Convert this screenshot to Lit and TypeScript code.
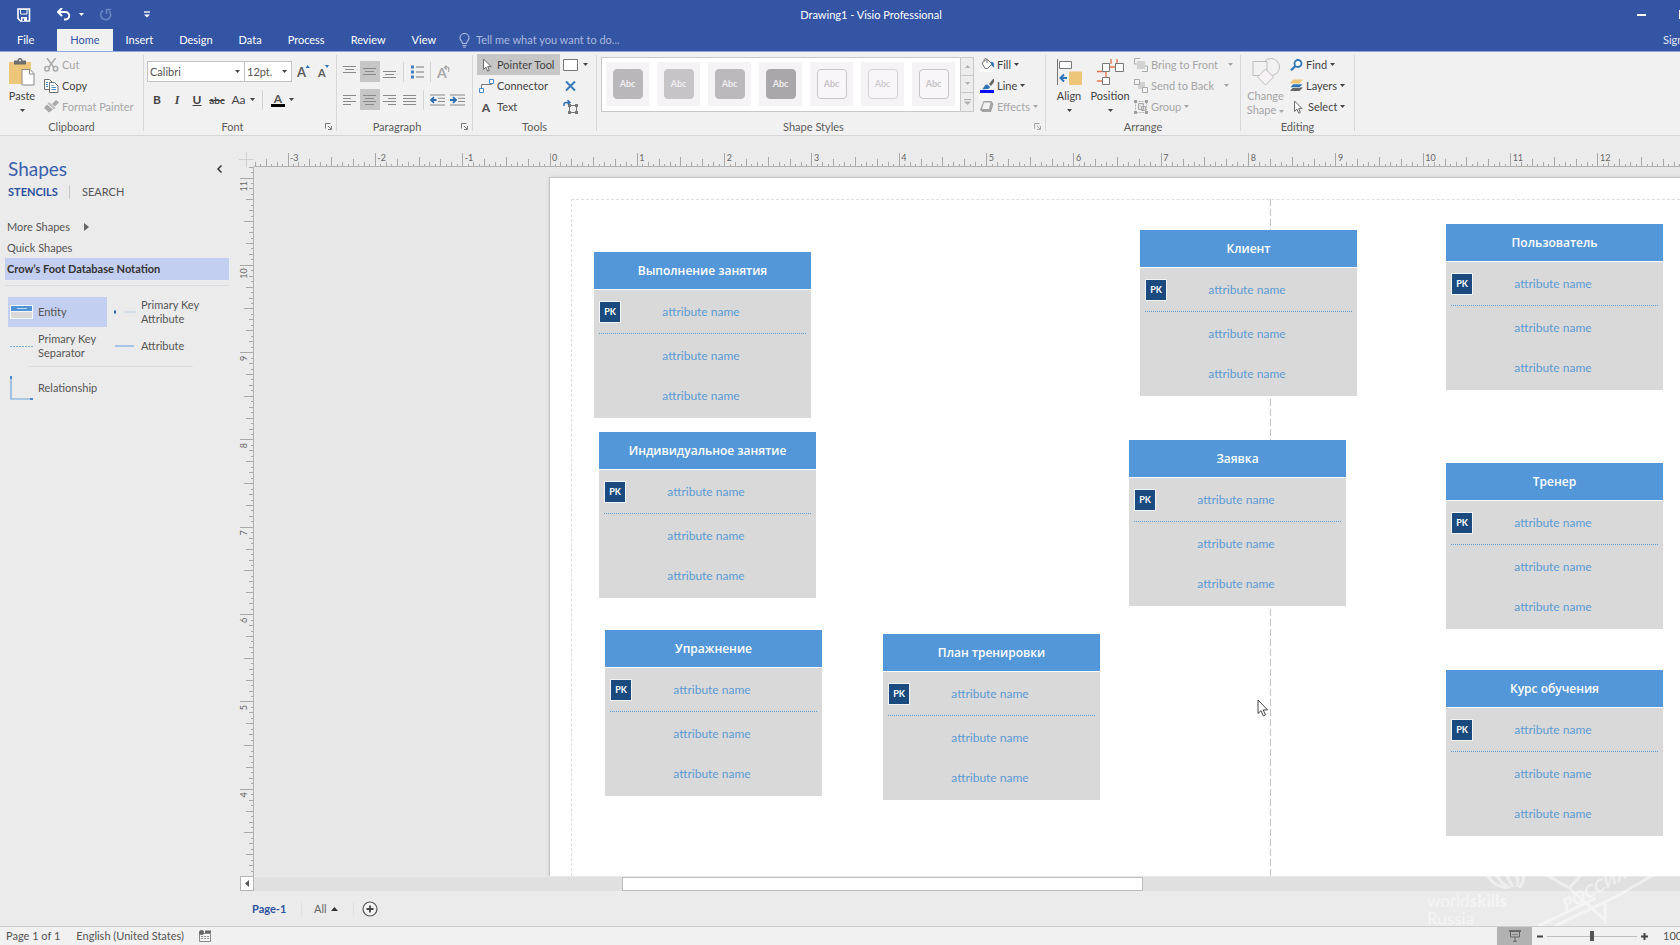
import { LitElement, html, svg, css } from "lit";
import { customElement, property } from "lit/decorators.js";
import { classMap } from "lit/directives/class-map.js";
import { styleMap } from "lit/directives/style-map.js";

const INCH = 87.33;

const icon = (w: number, h: number, body: unknown) =>
  html`<svg class="icon" width=${w} height=${h} viewBox="0 0 ${w} ${h}" aria-hidden="true">${body}</svg>`;

const caret = html`<svg class="caret" width="5" height="3" viewBox="0 0 5 3" aria-hidden="true"><path d="M0 0h5L2.5 3z" fill="currentColor"/></svg>`;

const icons = {
  save: icon(14, 14, svg`<path d="M1 1h11.500v12H3.500L1 10.500z" fill="none" stroke="#fff" stroke-width="1.600"/><path d="M3.500 1.500h6.500v4.500H3.500z" fill="#3355a4" stroke="#fff"/><path d="M4 9h6v4H4z" fill="#fff"/><path d="M5.500 10.500h1.500V13H5.500z" fill="#3355a4"/>`),
  undo: icon(14, 13, svg`<path d="M1 4h7.500a3.700 3.700 0 0 1 0 7.500H7" fill="none" stroke="#fff" stroke-width="2"/><path d="M5 0 1 4l4 4" fill="none" stroke="#fff" stroke-width="2"/>`),
  redo: icon(14, 13, svg`<path d="M4 2.500a5 5 0 1 0 6 0.500" fill="none" stroke="#6a84c4" stroke-width="1.700"/><path d="M7.500 6V1.500H12" fill="none" stroke="#6a84c4" stroke-width="1.600"/>`),
  customize: icon(6, 7, svg`<path d="M0 1h6" stroke="#fff" stroke-width="1.300"/><path d="M0 3.500h6L3 6.500z" fill="#fff"/>`),
  bulb: icon(11, 15, svg`<path d="M3.500 10.500c0-2-2.500-2.800-2.500-5.500a4.500 4.500 0 0 1 9 0c0 2.700-2.500 3.500-2.500 5.500z" fill="none" stroke="#a9b9df" stroke-width="1.200"/><path d="M3.500 12.500h4M4 14.200h3" stroke="#a9b9df"/>`),
  paste: icon(26, 28, svg`<path d="M0 4h22v22H0z" fill="#edc67a"/><path d="M5 2.500h3.500a2.500 2.500 0 0 1 5 0H17V6.500H5z" fill="#6d6d6d"/><circle cx="11" cy="2.500" r="1" fill="#f1f1f1"/><path d="M13 11.500h8l4 4V27H13z" fill="#fff" stroke="#8a8a8a"/><path d="M20.500 11.500V16H25" fill="none" stroke="#8a8a8a"/>`),
  cut: icon(15, 14, svg`<g fill="none" stroke="#a9a9a9" stroke-width="1.500"><path d="M3 0l6.500 9M11.500 0L5 9"/><circle cx="3" cy="10.800" r="2.200"/><circle cx="11.500" cy="10.800" r="2.200"/></g>`),
  copy: icon(15, 14, svg`<g fill="#fff" stroke="#6f6f6f"><path d="M.5.5h5l2.500 2.500v7.500H.5z"/><path d="M5.500 3.500h5l3.500 3.500v6.500H5.500z"/></g><path d="M2 3.500h2M2 5.500h2M2 7.500h2M7.500 6.500h2M7.500 8.500h4.500M7.500 10.500h4.500" stroke="#4a8bc6"/>`),
  painter: icon(15, 13, svg`<path d="M8 4l4-4 3 2.500-4 4z" fill="#a9a9a9"/><path d="M5 2l6.500 6-1.500 1.500L3.500 3.500z" fill="#bdbdbd"/><path d="M3 4.500L0 8l5 4.500 4-3z" fill="#a9a9a9"/>`),
  fontColor: icon(14, 14, svg`<text x="7" y="9.500" text-anchor="middle" font-family="Lato, sans-serif" font-weight="700" font-size="12" fill="#555">A</text><path d="M0 11h14v3H0z" fill="#000"/>`),
  grow: icon(13, 13, svg`<text x="0" y="12" font-family="Lato, sans-serif" font-weight="700" font-size="13" fill="#5c5c5c">A</text><path d="M8.500 3L10.500 0l2.500 3z" fill="#2e75b6"/>`),
  shrink: icon(13, 13, svg`<text x="1" y="12" font-family="Lato, sans-serif" font-weight="700" font-size="11" fill="#5c5c5c">A</text><path d="M8 0h4L10 3z" fill="#2e75b6"/>`),
  bullets: icon(13, 14, svg`<path d="M0 .5h3v3H0zM0 5.500h3v3H0zM0 10.500h3v3H0z" fill="#3f7fbf"/><path d="M5 2h8M5 7h8M5 12h8" stroke="#777"/>`),
  rotate: icon(14, 14, svg`<text x="0" y="13" font-family="Lato, sans-serif" font-weight="700" font-size="14" fill="#a8a8a8">A</text><path d="M8 2.500c3-2 5 1 3.500 4.500M9.500.5L7.500 2.700l2.500 1.800" fill="none" stroke="#a8a8a8" stroke-width="1.300"/>`),
  outdent: icon(15, 12, svg`<path d="M0 1h15M8 4.300h7M8 7.500h7M0 11h15" stroke="#8a8a8a"/><path d="M6.500 6H2M4 3.200L1 6l3 2.800" fill="none" stroke="#2b6cb0" stroke-width="1.800"/>`),
  indent: icon(15, 12, svg`<path d="M0 1h15M8 4.300h7M8 7.500h7M0 11h15" stroke="#8a8a8a"/><path d="M0 6h5M3 3.200L6 6 3 8.800" fill="none" stroke="#2b6cb0" stroke-width="1.800"/>`),
  pointer: icon(15, 14, svg`<path d="M4.500 1v10.500l2.500-2.300 1.700 4 1.600-.7L8.700 8.600h3.400z" fill="#fff" stroke="#6a6a6a"/>`),
  connector: icon(15, 14, svg`<path d="M2.500 9V5.500h10V4" fill="none" stroke="#777"/><path d="M10.500.5h4v4h-4zM.5 9.500h4v4h-4z" fill="#fff" stroke="#4a8bc6"/>`),
  text: icon(15, 14, svg`<text x="7" y="12" text-anchor="middle" font-family="Lato, sans-serif" font-weight="900" font-size="12" fill="#555">A</text>`),
  rect: icon(15, 12, svg`<path d="M.5.5h14v11H.5z" fill="#fff" stroke="#777"/>`),
  cross: icon(15, 12, svg`<path d="M3 1.500l9 9M12 1.500l-9 9" stroke="#3a79b8" stroke-width="2"/>`),
  crop: icon(15, 14, svg`<path d="M6.500 5.500h7v7h-7z" fill="none" stroke="#777"/><path d="M5 4h3v3H5zM12 4h3v3h-3zM5 11h3v3H5zM12 11h3v3h-3z" fill="#777"/><path d="M1 6V4.500q0-2 2-2h3M4.500 0L7 2.500 4.500 4" fill="none" stroke="#2e75b6" stroke-width="1.500"/>`),
  fill: icon(14, 14, svg`<path d="M0 11h14v3H0z" fill="#fff"/><path d="M2 5l5-4 5 5-4.500 4.500H5z" fill="#fff" stroke="#777"/><path d="M4 3V1.500q1.500-2 3 0V5" fill="none" stroke="#777"/><path d="M11 3.500q3 .5 3 3v3l-2.500-2z" fill="#2e75b6"/>`),
  line: icon(14, 14, svg`<path d="M9 5l4-5h1v3l-3 4z" fill="#666"/><path d="M2 10c2 0 2-5 5.500-4.500L10 8c0 2-3 2.500-8 2z" fill="#2e75b6"/><path d="M0 11h14v3H0z" fill="#0a0af5"/>`),
  effects: icon(14, 12, svg`<path d="M3.500 0h8l2 3-2.500 8H2.500L0 9z" fill="#a3a3a3"/><path d="M4 1.500h6.500L9 8H2z" fill="#f1f1f1"/>`),
  align: icon(25, 26, svg`<path d="M.5 0v26" stroke="#777"/><path d="M2.500 2.500h12v7h-12z" fill="#fff" stroke="#777"/><path d="M12 12.500h13V26H12z" fill="#edc67a"/><path d="M10 19H4.500M7 15.500L3.500 19 7 22.500" fill="none" stroke="#2e75b6" stroke-width="2"/>`),
  position: icon(27, 26, svg`<path d="M0 12.500h9M0 22h5M9 12v6M14 0v5M20 0v5M13 8h5" stroke="#e2744d" stroke-width="1.300"/><path d="M5.500 4.500h7v8h-7zM18.500 4.500h8v8h-8zM5.500 18.500h7v7h-7z" fill="#fff" stroke="#777"/>`),
  front: icon(14, 14, svg`<path d="M3 3h8v8H3z" fill="#d2d2d2"/><path d="M6 .5H.5V6H3M8 13.500h5.500V8H11" fill="none" stroke="#a9a9a9"/>`),
  back: icon(14, 14, svg`<path d="M4 3h7v7H4z" fill="#d2d2d2"/><path d="M.5.5h5v5h-5zM8.500 8.500h5v5h-5z" fill="#f4f4f4" stroke="#a9a9a9"/>`),
  group: icon(14, 14, svg`<path d="M1.500 1.500h11v11h-11z" fill="none" stroke="#b5b5b5" stroke-dasharray="2 1"/><path d="M4.500 3.500h5v6h-5zM7.500 6.500h4v4h-4z" fill="#e2e2e2" stroke="#a9a9a9"/><path d="M0 0h3v3H0zM11 0h3v3h-3zM0 11h3v3H0zM11 11h3v3h-3z" fill="#a0a0a0"/>`),
  change: icon(28, 28, svg`<circle cx="19" cy="9" r="8.500" fill="#f1f1f1" stroke="#bdbdbd"/><path d="M1 3.500h14v14H1z" fill="#f1f1f1" stroke="#bdbdbd"/><path d="M13.500 11l8 8-8 8-8-8z" fill="#f6f2f6" stroke="#bdbdbd"/>`),
  find: icon(13, 12, svg`<circle cx="8" cy="4.500" r="3.500" fill="#fff" stroke="#2e75b6" stroke-width="1.800"/><path d="M5.500 7L1 11.300" stroke="#2e75b6" stroke-width="2.200"/>`),
  layers: icon(13, 13, svg`<path d="M3 8.500h10l-3.500 3.500H0z" fill="#666"/><path d="M3 5h10L9.500 8.500H0z" fill="#2e75b6" stroke="#f1f1f1" stroke-width=".6"/><path d="M3 .5h10L9.500 4.500H0z" fill="#edc67a"/>`),
  launcher: icon(7, 7, svg`<path d="M.5 5.500V.5h5" fill="none" stroke="currentColor"/><path d="M3 3l3 3M6.500 3v3.500H3" fill="none" stroke="currentColor"/>`),
  macro: icon(12, 12, svg`<path d="M.5 3.500h11v8H.5z" fill="#f4f4f4" stroke="#8a8a8a"/><path d="M6 .5h6V3H6z" fill="#666"/><circle cx="2.500" cy="2.500" r="2.500" fill="#666"/><path d="M2 6.500h8M2 8.500h8" stroke="#8a8a8a" stroke-dasharray="2 1"/>`),
  present: icon(12, 12, svg`<path d="M0 1h12" stroke="#555" stroke-width="1.500"/><path d="M1.500 1.500h9v5.500h-9zM6 7v4M4 11.300h4" fill="none" stroke="#666"/><path d="M3 4.500h6" stroke="#888"/>`),
  plusCircle: icon(16, 16, svg`<circle cx="8" cy="8" r="7" fill="#f4f4f4" stroke="#555" stroke-width="1.200"/><path d="M8 4.500v7M4.500 8h7" stroke="#444" stroke-width="1.800"/>`),
};

const lines = (rows: number[][]) =>
  icon(14, 12, svg`${rows.map(([x, y, w]) => svg`<path d="M${x} ${y}h${w}" stroke="#8a8a8a"/>`)}`);

const paraIcons = {
  top: lines([[0, 0.5, 13], [2, 3.5, 9], [0, 6.5, 13]]),
  middle: lines([[0, 2.5, 13], [2, 5.5, 9], [0, 8.5, 13]]),
  bottom: lines([[0, 5.5, 13], [2, 8.5, 9], [0, 11.5, 13]]),
  left: lines([[0, 1.5, 13], [0, 4.5, 8], [0, 7.5, 13], [0, 10.5, 8]]),
  center: lines([[0, 1.5, 13], [2, 4.5, 9], [0, 7.5, 13], [2, 10.5, 9]]),
  right: lines([[0, 1.5, 13], [5, 4.5, 8], [0, 7.5, 13], [5, 10.5, 8]]),
  justify: lines([[0, 1.5, 13], [0, 4.5, 13], [0, 7.5, 13], [0, 10.5, 13]]),
};

const base = css`
  :host, * { box-sizing: border-box; }
  button {
    font: inherit; color: inherit; background: none; border: 0; padding: 0; margin: 0;
    display: inline-flex; align-items: center; white-space: nowrap;
  }
  .icon, .caret { display: block; flex: none; }
  h2, p, ul { margin: 0; padding: 0; font: inherit; }
`;

@customElement("visio-title")
class VisioTitle extends LitElement {
  static styles = [base, css`
    :host { display: block; background: #3355a4; color: #fff; height: 52px; border-bottom: 1px solid #8fa9dc; overflow: hidden; }
    .bar { display: grid; height: 29px; align-items: center; }
    .bar > * { grid-area: 1 / 1; }
    .quick { display: flex; align-items: center; padding-left: 17px; height: 26px; }
    .quick .undo { margin-left: 26px; }
    .quick .more { margin-left: 8px; }
    .quick .redo { margin-left: 15px; }
    .quick .custom { margin-left: 31px; }
    h1 { margin: 0; font: inherit; text-align: center; padding-left: 62px; }
    .window { justify-self: end; display: flex; gap: 33px; width: 43px; align-items: center; }
    .min { width: 9px; height: 2px; background: #fff; flex: none; }
    .max { width: 9px; height: 9px; border: 1px solid #fff; flex: none; }
    .tabs { display: flex; height: 22px; align-items: stretch; }
    .tabs button { padding: 0 13px; }
    .tabs .file { padding: 0 23px 0 17px; }
    .tabs .active { background: #f1f1f1; color: #3355a4; }
    .tell { display: flex; align-items: center; gap: 6px; margin-left: 10px; color: #a9b9df; }
    .tell input { width: 180px; border: 0; padding: 0; background: none; font: inherit; color: inherit; }
    .tell input::placeholder { color: #a9b9df; opacity: 1; }
    .tabs .sign { margin-left: auto; padding: 0; width: 17px; color: #e3e9f6; }
  `];
  render() {
    return html`
      <div class="bar">
        <div class="quick">
          <button aria-label="Save">${icons.save}</button>
          <button class="undo" aria-label="Undo">${icons.undo}</button>
          <button class="more" aria-label="Undo history">${caret}</button>
          <button class="redo" aria-label="Redo">${icons.redo}</button>
          <button class="custom" aria-label="Customize toolbar">${icons.customize}</button>
        </div>
        <h1>Drawing1 - Visio Professional</h1>
        <div class="window"><button class="min" aria-label="Minimize"></button><button class="max" aria-label="Maximize"></button></div>
      </div>
      <div class="tabs">
        <button class="file">File</button>
        ${["Home", "Insert", "Design", "Data", "Process", "Review", "View"].map(
          (t) => html`<button class=${classMap({ active: t === "Home" })}>${t}</button>`
        )}
        <label class="tell">${icons.bulb}<input aria-label="Tell me" placeholder="Tell me what you want to do..." /></label>
        <button class="sign">Sign in</button>
      </div>`;
  }
}

@customElement("visio-ribbon")
class VisioRibbon extends LitElement {
  static styles = [base, css`
    :host { display: flex; background: #f1f1f1; border-bottom: 1px solid #d5d5d5; height: 84px; color: #444; }
    section { display: grid; grid-template-rows: 66px 17px; position: relative; flex: none; padding-right: 1px; }
    section::after { content: ""; position: absolute; right: 0; top: 3px; bottom: 4px; width: 1px; background: #d8d8d8; }
    .w1 { width: 144px; } .w2 { width: 193px; } .w3 { width: 136px; } .w4 { width: 124px; }
    .w5 { width: 449px; } .w6 { width: 195px; } .w7 { width: 114px; }
    .foot { display: grid; grid-template-columns: 1fr auto; align-items: center; color: #5c5c5c; }
    .foot h2 { text-align: center; }
    .foot button { width: 15px; color: #777; padding-left: 4px; }
    .body { display: flex; padding-top: 2px; }
    .stack { display: grid; grid-template-rows: repeat(3, 21px); justify-items: start; align-content: start; }
    .stack button { gap: 3px; height: 21px; }
    .off, .foot .off { color: #a6a6a6; }
    .big { flex-direction: column; justify-content: flex-start; padding-top: 4px; line-height: 14px; height: 64px; }
    .big .icon { height: 28px; }
    .big span { margin-top: 3px; }
    .big .caret { margin-top: 6px; }
    .big .two { margin-top: 3px; display: block; text-align: center; }
    .big .two .caret { display: inline-block; vertical-align: middle; margin: 0 0 0 3px; }
    .paste { width: 44px; }
    .rows { display: grid; grid-template-rows: 21px 21px; row-gap: 7px; padding: 9px 0 0 3px; align-content: start; }
    .row { display: flex; align-items: center; }
    .t { width: 20px; height: 21px; justify-content: center; flex: none; }
    .on { background: #c6c6c6; }
    .sep { width: 1px; height: 20px; background: #d4d4d4; margin: 0 3px; flex: none; }
    .sel { position: relative; display: flex; align-items: center; }
    .sel .caret { position: absolute; right: 5px; pointer-events: none; }
    select { appearance: none; font: inherit; color: #555; background: #fff; border: 1px solid #c3c3c3; height: 21px; padding: 0 2px; border-radius: 0; }
    .face { width: 98px; } .size { width: 48px; margin-left: -1px; }
    .size + .caret { margin: 0; }
    .sizes { margin-right: 1px; }
    b, i, u, s { font-size: 12px; }
    i { font-family: "Liberation Serif", serif; font-weight: 700; }
    u { font-weight: 700; } s { font-size: 10px; font-weight: 700; }
    .case { width: 32px; gap: 4px; font-size: 12px; justify-content: center; }
    .tools { padding-left: 4px; grid-template-columns: 84px auto; }
    .tools .main { width: 83px; padding-left: 2px; }
    .tools .side { padding-left: 2px; gap: 5px; }
    .gallery { margin: 3px 0 0 4px; height: 55px; border: 1px solid #c8c8c8; background: #fff; display: flex; }
    .swatches { display: flex; gap: 8px; padding: 4px 5px 4px 4px; }
    .swatch { width: 43px; height: 44px; background: #f6f3f6; justify-content: center; }
    .swatch span { width: 30px; height: 30px; border-radius: 4px; border: 1px solid var(--edge); background: var(--tone); color: var(--ink); display: grid; place-items: center; font-size: 9px; font-weight: 700; }
    .steps { display: grid; grid-template-rows: repeat(3, 1fr); border-left: 1px solid #c8c8c8; background: #ededed; width: 13px; color: #b0b0b0; }
    .steps button { justify-content: center; border-bottom: 1px solid #c8c8c8; }
    .steps button:last-child { border-bottom: 0; }
    .flip { transform: rotate(180deg); }
    .fills { padding-left: 6px; }
    .align { width: 40px; margin-left: 3px; }
    .pos { width: 42px; }
    .arr { padding-left: 3px; }
    .arr .far .caret { margin-left: 7px; }
    .chg { width: 49px; }
  `];
  private foot(name: string, launcher = false, off = false) {
    return html`<div class="foot"><h2>${name}</h2>
      ${launcher ? html`<button class=${classMap({ off })} aria-label="${name} settings">${icons.launcher}</button>` : ""}</div>`;
  }
  render() {
    const styles = [
      ["#b9b7ba", "#b9b7ba", "#f0eef0"], ["#c6c4c7", "#c6c4c7", "#f0eef0"], ["#bbb9bc", "#bbb9bc", "#f0eef0"], ["#a9a7aa", "#a9a7aa", "#f0eef0"],
      ["#f9f6f9", "#c9c6c9", "#c4c1c4"], ["#f9f6f9", "#d6d2d6", "#cfccd0"], ["#f9f6f9", "#c9c6c9", "#c4c1c4"],
    ];
    return html`
      <section class="w1">
        <div class="body">
          <button class="big paste">${icons.paste}<span>Paste</span>${caret}</button>
          <div class="stack">
            <button class="off">${icons.cut}Cut</button>
            <button>${icons.copy}Copy</button>
            <button class="off">${icons.painter}Format Painter</button>
          </div>
        </div>
        ${this.foot("Clipboard")}
      </section>
      <section class="w2">
        <div class="body rows">
          <div class="row">
            <label class="sel"><select class="face" aria-label="Font"><option>Calibri</option></select>${caret}</label>
            <label class="sel sizes"><select class="size" aria-label="Font size"><option>12pt.</option></select>${caret}</label>
            <button class="t" aria-label="Increase font size">${icons.grow}</button>
            <button class="t" aria-label="Decrease font size">${icons.shrink}</button>
          </div>
          <div class="row">
            <button class="t"><b>B</b></button><button class="t"><i>I</i></button>
            <button class="t"><u>U</u></button><button class="t"><s>abc</s></button>
            <button class="case">Aa${caret}</button><span class="sep"></span>
            <button class="case" aria-label="Font color">${icons.fontColor}${caret}</button>
          </div>
        </div>
        ${this.foot("Font", true)}
      </section>
      <section class="w3">
        <div class="body rows">
          <div class="row">
            <button class="t" aria-label="Align top">${paraIcons.top}</button>
            <button class="t on" aria-label="Align middle">${paraIcons.middle}</button>
            <button class="t" aria-label="Align bottom">${paraIcons.bottom}</button><span class="sep"></span>
            <button class="t" aria-label="Bullets">${icons.bullets}</button><span class="sep"></span>
            <button class="t" aria-label="Rotate text">${icons.rotate}</button>
          </div>
          <div class="row">
            <button class="t" aria-label="Align left">${paraIcons.left}</button>
            <button class="t on" aria-label="Center">${paraIcons.center}</button>
            <button class="t" aria-label="Align right">${paraIcons.right}</button>
            <button class="t" aria-label="Justify">${paraIcons.justify}</button><span class="sep"></span>
            <button class="t" aria-label="Decrease indent">${icons.outdent}</button>
            <button class="t" aria-label="Increase indent">${icons.indent}</button>
          </div>
        </div>
        ${this.foot("Paragraph", true)}
      </section>
      <section class="w4">
        <div class="body">
          <div class="stack tools">
            <button class="main on">${icons.pointer}Pointer Tool</button>
            <button class="side" aria-label="Rectangle">${icons.rect}${caret}</button>
            <button class="main">${icons.connector}Connector</button>
            <button class="side" aria-label="Connection point">${icons.cross}</button>
            <button class="main">${icons.text}Text</button>
            <button class="side" aria-label="Text block">${icons.crop}</button>
          </div>
        </div>
        ${this.foot("Tools")}
      </section>
      <section class="w5">
        <div class="body">
          <div class="gallery">
            <div class="swatches">
              ${styles.map(([tone, edge, ink]) => html`<button class="swatch"><span style=${styleMap({ "--tone": tone, "--edge": edge, "--ink": ink })}>Abc</span></button>`)}
            </div>
            <div class="steps">
              <button aria-label="Previous styles"><span class="flip">${caret}</span></button>
              <button aria-label="Next styles">${caret}</button>
              <button aria-label="More styles">${icon(7, 6, svg`<path d="M0 .5h7" stroke="#b0b0b0"/><path d="M0 2.500h7L3.500 6z" fill="#b0b0b0"/>`)}</button>
            </div>
          </div>
          <div class="stack fills">
            <button>${icons.fill}Fill${caret}</button>
            <button>${icons.line}Line${caret}</button>
            <button class="off">${icons.effects}Effects${caret}</button>
          </div>
        </div>
        ${this.foot("Shape Styles", true, true)}
      </section>
      <section class="w6">
        <div class="body">
          <button class="big align">${icons.align}<span>Align</span>${caret}</button>
          <button class="big pos">${icons.position}<span>Position</span>${caret}</button>
          <div class="stack arr">
            <button class="off far">${icons.front}Bring to Front${caret}</button>
            <button class="off far">${icons.back}Send to Back${caret}</button>
            <button class="off">${icons.group}Group${caret}</button>
          </div>
        </div>
        ${this.foot("Arrange")}
      </section>
      <section class="w7">
        <div class="body">
          <button class="big chg off">${icons.change}<span class="two">Change<br />Shape${caret}</span></button>
          <div class="stack">
            <button>${icons.find}Find${caret}</button>
            <button>${icons.layers}Layers${caret}</button>
            <button>${icons.pointer}Select${caret}</button>
          </div>
        </div>
        ${this.foot("Editing")}
      </section>`;
  }
}

@customElement("visio-shapes")
class VisioShapes extends LitElement {
  static styles = [base, css`
    :host { display: block; width: 239px; flex: none; padding: 20px 10px 0 5px; color: #555; }
    .head { display: flex; justify-content: space-between; align-items: center; padding: 0 7px 0 3px; height: 26px; }
    h1 { margin: 0; font-size: 19px; font-weight: 400; line-height: 26px; color: #3a5fae; }
    .modes { display: flex; align-items: center; gap: 12px; height: 20px; padding-left: 3px; }
    .modes .cur { font-weight: 700; color: #2c4f9e; width: 49px; }
    .modes i { width: 1px; height: 14px; background: #c8c8c8; }
    .list { margin-top: 14px; display: grid; grid-template-rows: 21px 21px; justify-items: start; padding-left: 2px; }
    .list button { gap: 14px; }
    .stencil { width: 100%; height: 22px; background: #c3cff1; padding-left: 2px; font-weight: 700; color: #333; }
    .items { border-top: 1px solid #d8dbe2; margin: 5px 0 0; padding: 11px 0 0 3px; display: grid; grid-template-columns: 99px 4px 99px; grid-template-rows: 30px 38px; }
    .items button { text-align: left; gap: 5px; line-height: 14px; padding-left: 2px; white-space: normal; }
    .items .icon { width: 23px; }
    .items .second { grid-column: 3; }
    .picked { background: #c3cff1; }
    .rel { border-top: 1px solid #dcdcdc; margin: 1px 36px 0 23px; }
    .relb { gap: 5px; margin: 9px 0 0 5px; }
  `];
  render() {
    return html`
      <div class="head"><h1>Shapes</h1><button aria-label="Collapse">${icon(5, 8, svg`<path d="M4.500.5L1 4l3.500 3.500" fill="none" stroke="#333" stroke-width="1.500"/>`)}</button></div>
      <div class="modes"><button class="cur">STENCILS</button><i></i><button>SEARCH</button></div>
      <div class="list">
        <button>More Shapes${icon(5, 8, svg`<path d="M0 0v8l5-4z" fill="#666"/>`)}</button>
        <button>Quick Shapes</button>
      </div>
      <button class="stencil">Crow’s Foot Database Notation</button>
      <div class="items">
        <button class="picked">${icon(23, 14, svg`<path d="M0 0h23v14H0z" fill="#f5f7fb"/><path d="M1 1h21v5H1z" fill="#4f94d6"/><path d="M7 3.500h10" stroke="#b9d6f0"/><path d="M1 7h21v6H1z" fill="#d9d9d9"/>`)}<span>Entity</span></button>
        <button class="second">${icon(23, 4, svg`<path d="M1 .5h2v3H1z" fill="#2f5f94"/><path d="M11 2h12" stroke="#b8cfe6"/>`)}<span>Primary Key Attribute</span></button>
        <button>${icon(23, 3, svg`<path d="M0 1.500h23" stroke="#7fb0dd" stroke-dasharray="2 1"/>`)}<span>Primary Key Separator</span></button>
        <button class="second">${icon(23, 4, svg`<path d="M2 2h19" stroke="#8fb9e2" stroke-width="1.500"/>`)}<span>Attribute</span></button>
      </div>
      <div class="rel"></div>
      <button class="relb">${icon(23, 24, svg`<path d="M1 1v22h21" fill="none" stroke="#6ca6dc" stroke-width="1.200"/><path d="M0 0h2v3H0zM20 22h3v2h-3z" fill="#4a8bc6"/>`)}Relationship</button>`;
  }
}

@customElement("visio-entity")
class VisioEntity extends LitElement {
  @property() name = "";
  static styles = [base, css`
    :host { display: block; width: 217px; font-size: 12px; line-height: 16px; }
    h2 { background: #5497d8; color: #fff; font: 600 12px/37px "Open Sans", sans-serif; text-align: center; margin-bottom: 1px; }
    .body { background: #d9d9d9; color: #5b9bd5; padding: 0 5px 5px; }
    .row { display: grid; align-items: center; height: 44px; }
    .key { height: 43px; border-bottom: 1px dotted #5b9bd5; box-sizing: content-box; }
    .last { height: 35px; }
    .row > * { grid-area: 1 / 1; text-align: center; padding-right: 3px; }
    .row .pk { justify-self: start; width: 22px; height: 22px; padding: 0; background: #1b4a7e; color: #fff; border: 1px solid #f0f4f8; font-size: 9px; line-height: 20px; font-weight: 700; }
  `];
  render() {
    return html`<h2>${this.name}</h2>
      <div class="body">
        <div class="row key"><span>attribute name</span><span class="pk">PK</span></div>
        <div class="row"><span>attribute name</span></div>
        <div class="row last"><span>attribute name</span></div>
      </div>`;
  }
}

const tickLength = (i: number) => (i % 16 === 0 ? 14 : i % 8 === 0 ? 10 : i % 4 === 0 ? 8 : i % 2 === 0 ? 5 : 3);
const range = (from: number, to: number) => Array.from({ length: to - from + 1 }, (_, k) => from + k);

const entities = [
  { name: "Выполнение занятия", x: 44, y: 74 },
  { name: "Индивидуальное занятие", x: 49, y: 254 },
  { name: "Упражнение", x: 55, y: 452 },
  { name: "План тренировки", x: 333, y: 456 },
  { name: "Клиент", x: 590, y: 52 },
  { name: "Заявка", x: 579, y: 262 },
  { name: "Пользователь", x: 896, y: 46 },
  { name: "Тренер", x: 896, y: 285 },
  { name: "Курс обучения", x: 896, y: 492 },
];

@customElement("visio-workspace")
class VisioWorkspace extends LitElement {
  static styles = [base, css`
    :host { position: relative; flex: 1; min-width: 0; display: flex; flex-direction: column; padding-top: 16px; }
    .area { flex: 1; display: grid; grid-template-columns: 15px 1fr; grid-template-rows: 15px 1fr; min-height: 0; }
    .area > svg { display: block; width: 100%; height: 100%; min-width: 0; min-height: 0; overflow: hidden; }
    .hr { border-bottom: 1px solid #b0b0b0; } .vr { border-right: 1px solid #b0b0b0; }
    .ticks { stroke: #a8a8a8; shape-rendering: crispEdges; }
    text { font-size: 9px; fill: #666; }
    .canvas { position: relative; overflow: hidden; background: #e8e8e8; min-height: 0; }
    .page { position: absolute; left: 296px; top: 11px; right: -200px; bottom: -200px; background: #fff; box-shadow: 0 0 0 1px #c4c4c4, 0 0 4px #b8b8b8; }
    .margins { position: absolute; left: 21px; top: 21px; right: 0; bottom: 0; border-left: 1px dashed #dedede; border-top: 1px dashed #dedede; }
    .break { position: absolute; left: 720px; top: 21px; bottom: 0; width: 1px; background: repeating-linear-gradient(#c6c6c6 0 7px, transparent 7px 10px); }
    visio-entity { position: absolute; }
    .cursor { position: absolute; left: 707px; top: 521px; }
    .scroll { display: flex; height: 15px; }
    .scroll button { width: 14px; margin-left: 1px; border: 1px solid #b5b5b5; background: #fff; justify-content: center; flex: none; }
    .track { flex: 1; background: #e0e0e0; display: grid; grid-template-columns: 368fr 522fr 537fr; border-top: 1px solid #e9e9e9; }
    .thumb { grid-column: 2; background: #fff; border: 1px solid #bdbdbd; }
    .pages { display: flex; align-items: center; height: 35px; padding-left: 13px; color: #666; }
    .pages .cur { color: #2f52a0; font-weight: 700; width: 49px; }
    .pages .all { gap: 4px; padding: 0 15px 0 12px; border: solid #e0e0e0; border-width: 0 1px; height: 14px; margin-right: 8px; }
    .mark { position: absolute; right: 0; bottom: 0; pointer-events: none; }
    .mark text { fill: #fff; font-size: 17px; }
  `];
  render() {
    return html`
      <div class="area">
        <svg viewBox="0 0 15 15"><path d="M0 7.500h15M7.500 0v15" stroke="#d0d0d0" fill="none"/></svg>
        <svg class="hr">
          <g class="ticks">${range(-54, 480).map((i) => svg`<line x1=${296 + (i * INCH) / 16} x2=${296 + (i * INCH) / 16} y1=${15 - tickLength(i)} y2="15"/>`)}</g>
          ${range(-3, 14).map((n) => svg`<text x=${298 + n * INCH} y="9">${n}</text>`)}
        </svg>
        <svg class="vr">
          <g class="ticks">${range(-2, 176).map((i) => svg`<line y1=${11 + (i * INCH) / 16} y2=${11 + (i * INCH) / 16} x1=${15 - tickLength(i)} x2="15"/>`)}</g>
          ${range(0, 7).map((n) => svg`<text text-anchor="end" transform="translate(8 ${14 + n * INCH}) rotate(-90)">${11 - n}</text>`)}
        </svg>
        <div class="canvas">
          <div class="page">
            <div class="margins"></div>
            <div class="break"></div>
            ${entities.map((e) => html`<visio-entity .name=${e.name} style=${styleMap({ left: `${e.x}px`, top: `${e.y}px` })}></visio-entity>`)}
            <svg class="cursor" width="12" height="18" viewBox="0 0 12 18"><path d="M1 1v13.500l3-2.800 2.300 5.200 2.200-1-2.300-5h4.300z" fill="#fff" stroke="#444"/></svg>
          </div>
        </div>
      </div>
      <div class="scroll">
        <button aria-label="Scroll left">${icon(4, 7, svg`<path d="M4 0v7L0 3.500z" fill="#555"/>`)}</button>
        <div class="track"><div class="thumb"></div></div>
      </div>
      <div class="pages">
        <button class="cur">Page-1</button>
        <button class="all">All${icon(7, 4, svg`<path d="M0 4L3.500 0 7 4z" fill="#333"/>`)}</button>
        <button aria-label="Insert page">${icons.plusCircle}</button>
      </div>
      <svg class="mark" width="260" height="52" viewBox="0 0 260 52" opacity=".45" aria-hidden="true">
        <text x="7" y="33">world<tspan font-weight="900">skills</tspan></text>
        <text x="7" y="51">Russia</text>
        <path d="M67 0q4 11 20 14M76 0q5 10 14 14M86 0q4 8 7 13M96 0q3 7 1 13M103 0q2 8-4 14" fill="none" stroke="#fff" stroke-width="3"/>
        <text transform="translate(145 38) rotate(-29) skewX(-15)" font-weight="900">РОССИЯ</text>
        <path d="M125 0l24 14 13-14M149 14l36 32V28M118 52l58-28M135 52l64-31 36-21" fill="none" stroke="#fff" stroke-width="3"/>
      </svg>`;
  }
}

@customElement("visio-status")
class VisioStatus extends LitElement {
  static styles = [base, css`
    :host { display: flex; align-items: center; height: 19px; border-top: 1px solid #cbcbcb; background: #f1f1f1; color: #555; padding-left: 6px; overflow: hidden; }
    .lang { margin: 0 15px 0 16px; }
    .show { margin-left: auto; width: 35px; align-self: stretch; background: #b2b2b2; justify-content: center; margin-right: 5px; }
    input { appearance: none; width: 90px; height: 12px; margin: 0 4px; background: linear-gradient(#bdbdbd, #bdbdbd) center / 100% 1px no-repeat; }
    input::-webkit-slider-thumb { appearance: none; width: 4px; height: 10px; background: #555; }
    .pct { width: 17px; margin-left: 15px; white-space: nowrap; }
  `];
  render() {
    return html`
      <span>Page 1 of 1</span><button class="lang">English (United States)</button><button aria-label="Macros">${icons.macro}</button>
      <button class="show" aria-label="Presentation mode">${icons.present}</button>
      <button aria-label="Zoom out">${icon(6, 7, svg`<path d="M0 3.500h6" stroke="#444" stroke-width="2"/>`)}</button>
      <input type="range" min="0" max="100" value="50" aria-label="Zoom" />
      <button aria-label="Zoom in">${icon(7, 7, svg`<path d="M0 3.500h7M3.500 0v7" stroke="#444" stroke-width="2"/>`)}</button>
      <span class="pct">100%</span>`;
  }
}

@customElement("app-root")
class AppRoot extends LitElement {
  static styles = css`
    :host { display: flex; flex-direction: column; height: 100vh; overflow: hidden; background: #ebebeb; font: 11px/14px Lato, "Open Sans", sans-serif; }
    .main { flex: 1; display: flex; min-height: 0; }
  `;
  render() {
    return html`
      <visio-title></visio-title>
      <visio-ribbon></visio-ribbon>
      <div class="main"><visio-shapes></visio-shapes><visio-workspace></visio-workspace></div>
      <visio-status></visio-status>`;
  }
}
